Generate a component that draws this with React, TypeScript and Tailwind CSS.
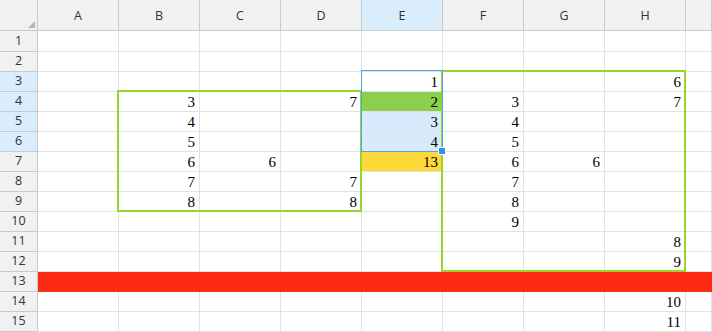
import React from "react";

const cols = ["A", "B", "C", "D", "E", "F", "G", "H", ""];

// values keyed by row -> column letter
const data: Record<number, Record<string, string>> = {
  3: { E: "1", H: "6" },
  4: { B: "3", D: "7", E: "2", F: "3", H: "7" },
  5: { B: "4", E: "3", F: "4" },
  6: { B: "5", E: "4", F: "5" },
  7: { B: "6", C: "6", E: "13", F: "6", G: "6" },
  8: { B: "7", D: "7", F: "7" },
  9: { B: "8", D: "8", F: "8" },
  10: { F: "9" },
  11: { H: "8" },
  12: { H: "9" },
  14: { H: "10" },
  15: { H: "11" },
};

const cellBg = (row: number, col: string) => {
  if (row === 13) return "bg-[#fd2b11] border-[#fd2b11]";
  if (col === "E" && row === 4) return "bg-[#8ccf4d] border-[#e2e2e2]";
  if (col === "E" && (row === 5 || row === 6)) return "bg-[#d8eafb] border-[#e2e2e2]";
  if (col === "E" && row === 7) return "bg-[#fdd838] border-[#e2e2e2]";
  return "bg-white border-[#e2e2e2]";
};

const rows = Array.from({ length: 15 }, (_, i) => i + 1);

const App = () => {
  return (
    <div className="relative w-[712px] h-[332px] overflow-hidden bg-white">
      <div className="grid grid-cols-[38px_repeat(8,81px)_1fr] grid-rows-[31px_21px_repeat(14,20px)]">
        {/* corner */}
        <div className="relative bg-[#f0f1f1] border-r border-b border-[#c9c9c9]">
          <div className="absolute right-[2px] bottom-[2px] w-0 h-0 border-l-[7px] border-l-transparent border-b-[7px] border-b-[#b5b5b5]" />
        </div>
        {cols.map((c, i) => (
          <div
            key={"h" + i}
            className={`flex items-center justify-center pt-[3px] border-r border-b border-[#c9c9c9] text-[12.5px] text-[#333] font-['Open_Sans',sans-serif] ${
              c === "E" ? "bg-[#d9edfc]" : "bg-[#f0f1f1]"
            }`}
          >
            {c}
          </div>
        ))}
        {rows.map((r) => (
          <React.Fragment key={r}>
            <div
              className={`flex items-center justify-center border-r border-b border-[#c9c9c9] text-[12.5px] text-[#333] font-['Open_Sans',sans-serif] ${
                r >= 3 && r <= 6 ? "bg-[#d9edfc]" : "bg-[#f0f1f1]"
              }`}
            >
              {r}
            </div>
            {cols.map((c, i) => (
              <div
                key={r + "-" + i}
                className={`flex items-center justify-end pr-[4px] pt-[2px] border-r border-b text-[15px] text-black font-['Liberation_Serif',serif] ${cellBg(r, c)}`}
              >
                {data[r]?.[c] ?? ""}
              </div>
            ))}
          </React.Fragment>
        ))}
      </div>

      {/* range B4:D9 */}
      <div className="absolute left-[117px] top-[90px] w-[245px] h-[122px] border-2 border-[#99d42a]" />
      {/* range F3:H12 */}
      <div className="absolute left-[441px] top-[70px] w-[245px] h-[202px] border-2 border-[#99d42a]" />
      {/* selection E3:E6 */}
      <div className="absolute z-10 left-[361px] top-[70px] w-[82px] h-[82px] border-[1.5px] border-[#4aa8ea]" />
      {/* fill handle */}
      <div className="absolute z-10 left-[439px] top-[148px] w-[6px] h-[6px] bg-[#2b95e6] outline outline-1 outline-white" />
    </div>
  );
};

export default App;
